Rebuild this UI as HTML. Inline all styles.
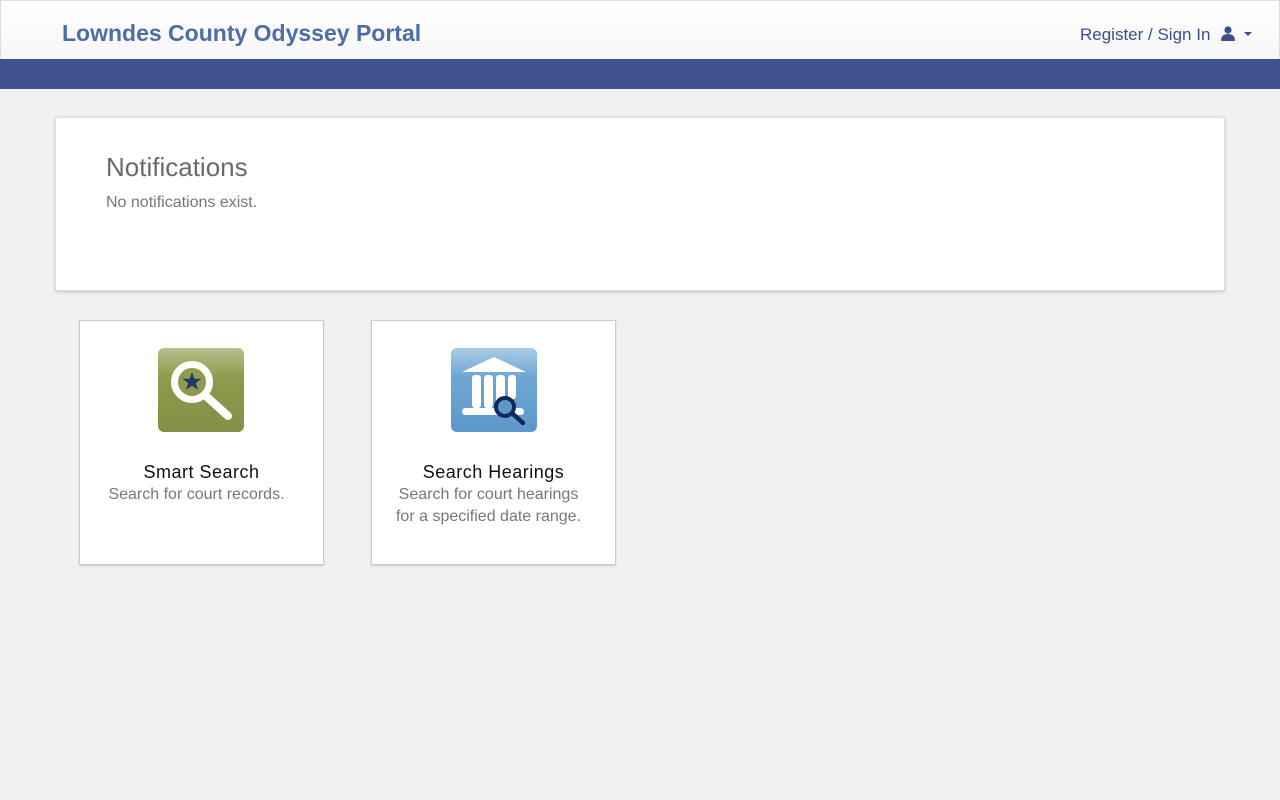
<!DOCTYPE html>
<html><head><style>
body{margin:0;background:#f1f1f1;font-family:"Liberation Sans",Arial,sans-serif;width:1280px;height:800px;overflow:hidden;position:relative}
.hdr{position:absolute;left:0;top:0;width:1278px;height:58px;border:1px solid #ddd;background:linear-gradient(#fff,#f6f6f6)}
.title{position:absolute;left:61px;top:19px;font-size:23px;font-weight:bold;color:#4a6ea5}
.sign{position:absolute;left:1079px;top:24px;font-size:17px;color:#3d4f8a}
.bar{position:absolute;left:0;top:59px;width:1280px;height:30px;background:#405290}
.notif{position:absolute;left:55px;top:117px;width:1168px;height:172px;background:#fff;border:1px solid #ddd;border-radius:3px;box-shadow:0 1px 3px rgba(0,0,0,.2)}
.notif h2{position:absolute;left:50px;top:34px;margin:0;font-weight:normal;font-size:26px;color:#6a6a6a}
.notif p{position:absolute;left:50px;top:76px;margin:0;font-size:16px;color:#777}
.card{position:absolute;top:320px;width:243px;height:243px;background:#fff;border:1px solid #ccc;box-shadow:0 1px 2px rgba(0,0,0,.15);text-align:center}
.card .t{position:absolute;top:141px;width:100%;font-size:18px;color:#111;letter-spacing:.5px}
.card .d{position:absolute;top:163px;left:-5px;width:100%;font-size:16px;color:#777;line-height:22px}
.card svg{position:absolute;top:26px}
</style></head><body>
<div class="hdr"><div class="title">Lowndes County Odyssey Portal</div>
<div class="sign">Register / Sign In
<svg width="14" height="15" viewBox="0 0 14 15" style="margin-left:6px;vertical-align:-1px"><circle cx="7" cy="4" r="3.6" fill="#3d4f8a"/><path d="M0 15 Q0 8 7 8 Q14 8 14 15Z" fill="#3d4f8a"/></svg>
<svg width="10" height="6" viewBox="0 0 10 6" style="margin-left:3px;vertical-align:3px"><path d="M1 1h8L5 5z" fill="#3d4f8a"/></svg></div></div>
<div class="bar"></div>
<div class="notif"><h2>Notifications</h2><p>No notifications exist.</p></div>
<div class="card" style="left:79px">
<svg width="88" height="86" viewBox="0 0 88 86" style="left:77px"><defs><linearGradient id="g1" x1="0" y1="0" x2="0" y2="1"><stop offset="0" stop-color="#b7bf8a"/><stop offset=".35" stop-color="#8f9a4e"/><stop offset="1" stop-color="#858f46"/></linearGradient></defs>
<rect x="1" y="1" width="86" height="84" rx="6" fill="url(#g1)"/>
<line x1="50" y1="50" x2="71" y2="69" stroke="#fff" stroke-width="8" stroke-linecap="round"/>
<circle cx="35" cy="35" r="17.5" fill="#8f9a4e" stroke="#fff" stroke-width="7"/>
<path d="M35 25l2.4 6.8h7.2l-5.8 4.2 2.2 6.8-6-4.2-6 4.2 2.2-6.8-5.8-4.2h7.2z" fill="#1e3a6a"/></svg>
<div class="t">Smart Search</div><div class="d">Search for court records.</div></div>
<div class="card" style="left:371px">
<svg width="88" height="86" viewBox="0 0 88 86" style="left:78px"><defs><linearGradient id="g2" x1="0" y1="0" x2="0" y2="1"><stop offset="0" stop-color="#a9cbe6"/><stop offset=".35" stop-color="#6fa6d2"/><stop offset="1" stop-color="#5d97c9"/></linearGradient></defs>
<rect x="1" y="1" width="86" height="84" rx="6" fill="url(#g2)"/>
<path d="M44 10L76 25H12z" fill="#fff"/>
<rect x="22" y="28" width="9" height="33" rx="3" fill="#fff"/><rect x="34" y="28" width="9" height="33" rx="3" fill="#fff"/><rect x="46" y="28" width="9" height="33" rx="3" fill="#fff"/><rect x="58" y="28" width="8" height="24" rx="3" fill="#fff"/>
<rect x="12" y="61" width="62" height="7" rx="3.5" fill="#fff"/>
<line x1="62" y1="66" x2="73" y2="76" stroke="#0d2a5a" stroke-width="4.5" stroke-linecap="round"/>
<circle cx="55" cy="60" r="9" fill="#5d97c9" stroke="#0d2a5a" stroke-width="4"/></svg>
<div class="t">Search Hearings</div><div class="d">Search for court hearings<br>for a specified date range.</div></div>
</body></html>
